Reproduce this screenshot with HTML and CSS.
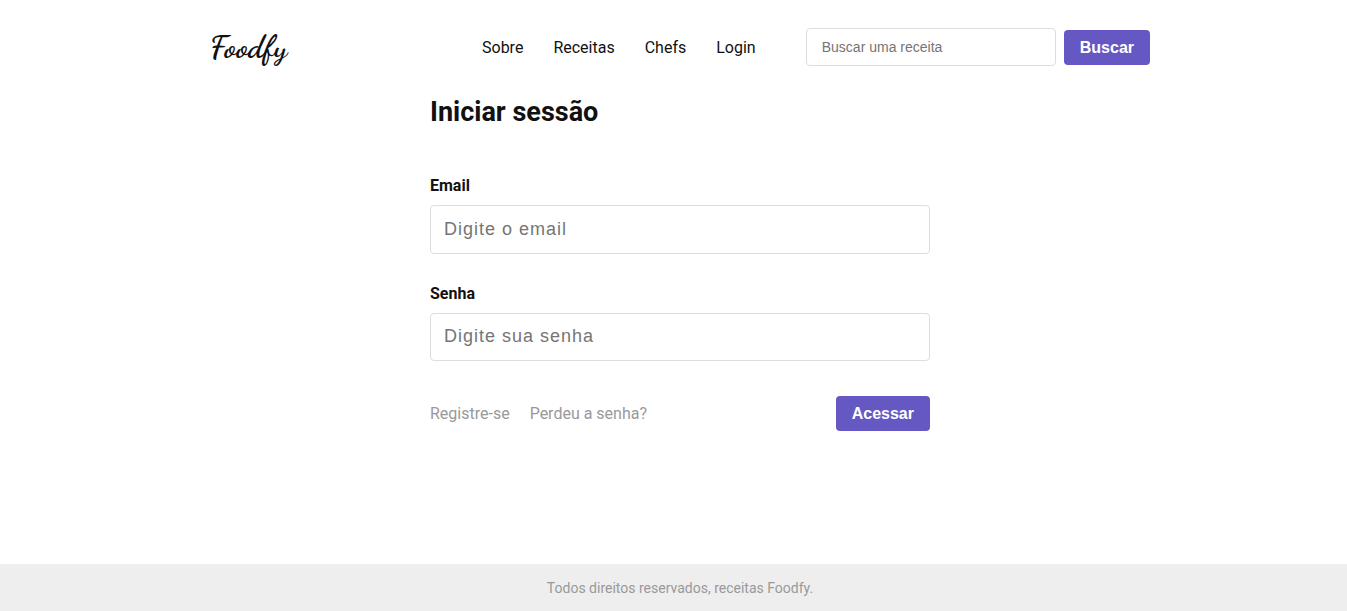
FILE: index.html
```html
<!DOCTYPE html>
<html lang="pt-BR">
<head>
<meta charset="utf-8">
<title>Foodfy</title>
<link rel="stylesheet" href="styles.css">
</head>
<body>
<div class="page">
  <header class="header">
    <a class="logo" href="#">Foodfy</a>
    <nav class="menu">
      <a href="#">Sobre</a>
      <a href="#">Receitas</a>
      <a href="#">Chefs</a>
      <a href="#">Login</a>
    </nav>
    <form class="search">
      <input type="text" placeholder="Buscar uma receita">
      <button class="button" type="button">Buscar</button>
    </form>
  </header>
  <main class="session">
    <h1>Iniciar sessão</h1>
    <form>
      <div class="field">
        <label for="email">Email</label>
        <input id="email" type="email" placeholder="Digite o email">
      </div>
      <div class="field">
        <label for="password">Senha</label>
        <input id="password" type="password" placeholder="Digite sua senha">
      </div>
      <div class="actions">
        <a href="#">Registre-se</a>
        <a href="#">Perdeu a senha?</a>
        <button class="button" type="button">Acessar</button>
      </div>
    </form>
  </main>
  <footer class="footer"><p>Todos direitos reservados, receitas Foodfy.</p></footer>
</div>
</body>
</html>
```
FILE: styles.css
```css
* { box-sizing: border-box; margin: 0; padding: 0; }

body {
  overflow: hidden;
  background: #fff;
  color: #111;
  font-family: Roboto, sans-serif;
  font-size: 16px;
}

a { color: inherit; text-decoration: none; }

.page {
  display: flex;
  flex-direction: column;
  width: 1360px;
  height: 611px;
}

.header {
  display: flex;
  align-items: center;
  width: 940px;
  height: 94px;
  margin: 0 auto;
}

.logo {
  width: 272px;
  font-family: "Dancing Script", "Liberation Serif", cursive;
  font-size: 32px;
  font-weight: bold;
  line-height: 38px;
}

.menu { display: flex; gap: 30px; }

.search { display: flex; align-items: center; gap: 8px; margin-left: auto; }

input {
  border: 1px solid #ddd;
  border-radius: 4px;
  background: #fff;
  font-family: "Liberation Sans", Arial, sans-serif;
}

input::placeholder { color: #757575; }

.search input { width: 250px; height: 38px; padding: 0 15px; font-size: 14px; }

.button {
  height: 35px;
  padding: 0 16px;
  border: 0;
  border-radius: 4px;
  background: #6558c3;
  color: #fff;
  font: bold 16px "Liberation Sans", Arial, sans-serif;
}

.search .button { padding-top: 1px; }

.session { width: 500px; margin: 0 auto; }

h1 { padding-top: 1px; margin-bottom: 47px; font-size: 27px; line-height: 34px; }

.field { margin-bottom: 30px; }

.field label { display: block; height: 29px; font-weight: bold; line-height: 19px; }

.field input {
  display: block;
  width: 100%;
  height: 48.6px;
  padding: 0 13px;
  font-size: 18px;
  letter-spacing: 1px;
}

.actions { display: flex; align-items: center; gap: 20px; margin-top: 35px; color: #999; }

.actions .button { margin-left: auto; }

.footer {
  display: flex;
  justify-content: center;
  align-items: center;
  height: 47px;
  margin-top: auto;
  background: #eee;
  color: #999;
  font-size: 14px;
}
```
